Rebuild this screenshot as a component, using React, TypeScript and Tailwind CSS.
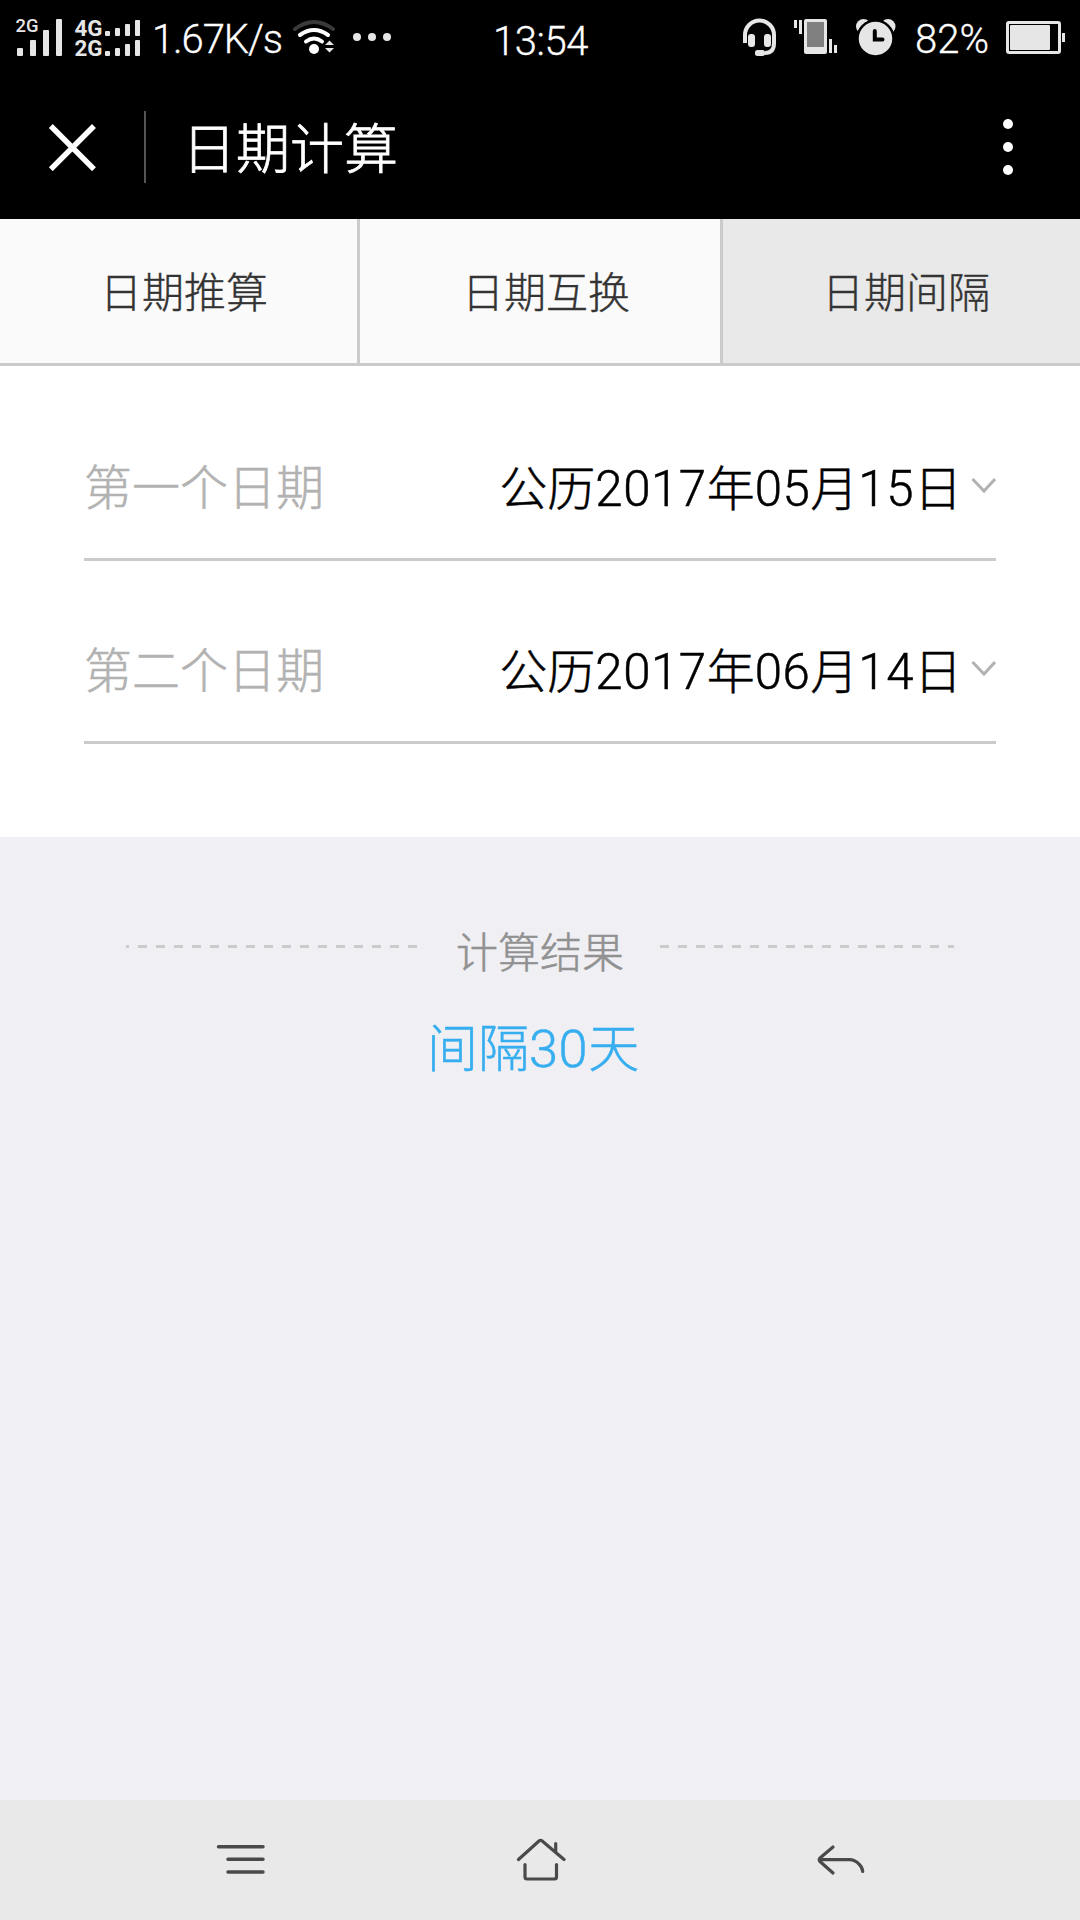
import type { ReactNode } from "react";

const FONT = "font-['Roboto','Noto_Sans_CJK_SC',sans-serif]";

function Latin({ children }: { children: ReactNode }) {
  return <span className="text-[1.025em] tracking-[0.011em]">{children}</span>;
}

function StatusBar() {
  return (
    <div className="flex h-20 pl-4 text-[40px] leading-[80px] font-light whitespace-nowrap text-white">
      <svg className="h-20 w-[46px] shrink-0" viewBox="16 0 46 80" fill="#e6e6e6">
        <text x="15.5" y="32" fontSize="17.5" fontWeight="500" textLength="23" lengthAdjust="spacingAndGlyphs">2G</text>
        <rect x="17" y="48" width="6" height="8" rx="1" />
        <rect x="30" y="40" width="6" height="16" rx="1" />
        <rect x="43" y="30" width="6" height="26" rx="1" />
        <rect x="56" y="19" width="6" height="37" rx="1" />
      </svg>
      <svg className="ml-3 h-20 w-[68px] shrink-0" viewBox="74 0 68 80" fill="#e6e6e6">
        <text x="74.5" y="36" fontSize="21.5" fontWeight="700" textLength="28" lengthAdjust="spacingAndGlyphs">4G</text>
        <text x="74.5" y="56" fontSize="21.5" fontWeight="700" textLength="28" lengthAdjust="spacingAndGlyphs">2G</text>
        <rect x="105" y="31" width="5" height="5" rx="1" />
        <rect x="115" y="28" width="5" height="8" rx="1" />
        <rect x="125" y="24" width="5" height="12" rx="1" />
        <rect x="135" y="20" width="5" height="16" rx="1" />
        <rect x="105" y="51" width="5" height="5" rx="1" />
        <rect x="115" y="48" width="5" height="8" rx="1" />
        <rect x="125" y="44" width="5" height="12" rx="1" />
        <rect x="135" y="40" width="5" height="16" rx="1" />
      </svg>
      <span className="ml-[10px] w-[139px] tracking-[-1.1px] [-webkit-text-stroke:0.3px]">1.67K/s</span>
      <svg className="h-20 w-11 shrink-0" viewBox="291 0 44 80" fill="none" strokeLinecap="round" strokeWidth="4">
        <path d="M295 29 Q314 15 333 29" stroke="#3a3a3a" />
        <path d="M300 35 Q314 25 328 35" stroke="#fff" />
        <path d="M306 41.500 Q314 35.500 322 41.500" stroke="#fff" />
        <circle cx="314" cy="49" r="5" fill="#fff" />
        <path d="M325 45 L329.500 40.500 L334 45 Z M325 48 L329.500 52.500 L334 48 Z" fill="#e6e6e6" />
      </svg>
      <svg className="ml-[17px] h-20 w-10 shrink-0" viewBox="352 0 40 80" fill="#e6e6e6">
        <circle cx="357" cy="37" r="4" />
        <circle cx="372" cy="37" r="4" />
        <circle cx="387" cy="37" r="4" />
      </svg>
      <span className="ml-[101px] w-[249px] leading-[83px] tracking-[-0.4px] [-webkit-text-stroke:0.3px]">13:54</span>
      <svg className="h-20 w-9 shrink-0" viewBox="742 0 36 80" fill="none" stroke="#e6e6e6" strokeWidth="4">
        <path d="M745 43 V35 A14.500 14.500 0 0 1 774 35 V43 Q774 53 765 53" />
        <rect x="748" y="34" width="7" height="13" rx="3" fill="#e6e6e6" stroke="none" />
        <rect x="764" y="34" width="7" height="13" rx="3" fill="#e6e6e6" stroke="none" />
        <rect x="755" y="50" width="10" height="6" rx="2.500" fill="#e6e6e6" stroke="none" />
      </svg>
      <svg className="ml-4 h-20 w-11 shrink-0" viewBox="794 0 44 80" fill="#e6e6e6">
        <rect x="794" y="20" width="3" height="8" />
        <rect x="799" y="20" width="3" height="14" />
        <rect x="804" y="19" width="23" height="35" rx="2" />
        <rect x="807" y="22" width="17" height="25" fill="#808080" />
        <rect x="829" y="39" width="3" height="14" />
        <rect x="834" y="45" width="3" height="8" />
      </svg>
      <svg className="ml-[18px] h-20 w-10 shrink-0" viewBox="856 0 40 80" fill="#e6e6e6">
        <circle cx="863.500" cy="26.500" r="7.500" />
        <circle cx="888" cy="26.500" r="7.500" />
        <circle cx="875.500" cy="38.500" r="18" stroke="#000" strokeWidth="2.500" />
        <path d="M874.800 31 V39.500 H882.500" fill="none" stroke="#000" strokeWidth="4" strokeLinecap="round" />
      </svg>
      <span className="ml-[19px] w-[91px] [-webkit-text-stroke:0.3px]">82%</span>
      <svg className="h-20 w-[60px] shrink-0" viewBox="1006 0 60 80" fill="#e6e6e6">
        <rect x="1007.500" y="22.500" width="52" height="30" rx="1.500" fill="none" stroke="#e6e6e6" strokeWidth="3" />
        <rect x="1010" y="25" width="40" height="25" rx="1" />
        <rect x="1062" y="33" width="3" height="9" />
      </svg>
    </div>
  );
}

function TitleBar() {
  return (
    <div className="flex h-[139px] items-start text-white">
      <svg className="mt-[43px] ml-12 size-12" viewBox="48 123 48 48" stroke="#fff" strokeWidth="5.500">
        <path d="M50.800 126 L94 169.200 M94 126 L50.800 169.200" />
      </svg>
      <div className="mt-[31px] ml-12 h-[72px] w-0.5 bg-[#555]" />
      <h1 className="mt-[31px] ml-9 text-[54px] leading-[80px] font-light [-webkit-text-stroke:0.8px]">日期计算</h1>
      <svg className="mt-[38px] mr-[67px] ml-auto h-[58px] w-[10px]" viewBox="0 0 10 58" fill="#fff">
        <circle cx="5" cy="6" r="5" />
        <circle cx="5" cy="29" r="5" />
        <circle cx="5" cy="52" r="5" />
      </svg>
    </div>
  );
}

function DateRow({ label, children }: { label: string; children: ReactNode }) {
  return (
    <div className="flex h-[183px] items-start border-b-3 border-[#cbcbcb] pt-[75px] text-5xl leading-[72px] font-light [-webkit-text-stroke:0.5px]">
      <span className="text-[#b2b2b2]">{label}</span>
      <span className="ml-auto whitespace-nowrap text-black">{children}</span>
      <svg className="mt-6 ml-2 h-[18px] w-[26px]" viewBox="0 0 26 18" fill="none" stroke="#b2b2b2" strokeWidth="3">
        <path d="M2.500 2 L14 14 L25 2" />
      </svg>
    </div>
  );
}

export default function App() {
  return (
    <div className={`flex h-[1920px] w-[1080px] flex-col overflow-hidden bg-[#efeff4] ${FONT}`} lang="zh-CN">
      <header className="bg-black">
        <StatusBar />
        <TitleBar />
      </header>
      <nav className="grid h-[147px] grid-cols-[360px_363px_357px] border-b-3 border-[#cbcbcb] bg-[#fafafa] text-[42px] leading-[149px] font-light text-[#333] [-webkit-text-stroke:0.4px]">
        <div className="h-36 border-r-3 border-[#cbcbcb] pl-[100px]">日期推算</div>
        <div className="h-36 border-r-3 border-[#cbcbcb] pl-[102px]">日期互换</div>
        <div className="h-36 bg-[#e9e9e9] pl-[99px]">日期间隔</div>
      </nav>
      <section className="h-[471px] bg-white px-[84px] pt-3">
        <DateRow label="第一个日期">
          公历<Latin>2017</Latin>年<Latin>05</Latin>月<Latin>15</Latin>日
        </DateRow>
        <DateRow label="第二个日期">
          公历<Latin>2017</Latin>年<Latin>06</Latin>月<Latin>14</Latin>日
        </DateRow>
      </section>
      <section className="flex-1 pt-[99px] font-light [-webkit-text-stroke:0.5px]">
        <div className="flex h-[60px] justify-between px-[126px]">
          <svg className="mt-[9px] h-[3px] w-[294px]" viewBox="0 0 294 3" stroke="#cbcbcb" strokeWidth="3">
            <path d="M0 1.500 H3" />
            <path d="M12 1.500 H291" strokeDasharray="9 9" />
          </svg>
          <span className="-mt-3 text-[42px] leading-[60px] text-[#919191]">计算结果</span>
          <svg className="mt-[9px] h-[3px] w-[294px]" viewBox="0 0 294 3" stroke="#cbcbcb" strokeWidth="3">
            <path d="M0 1.500 H294" strokeDasharray="9 9" />
          </svg>
        </div>
        <div className="mt-[18px] pl-[427px] text-[51px] leading-[72px] text-[#36aeef]">
          间隔<Latin>30</Latin>天
        </div>
      </section>
      <footer className="flex h-[120px] items-start justify-between bg-[#e9e9e9] pt-9 pr-[214px] pl-[216px]">
        <svg className="h-12 w-[50px]" viewBox="216 1836 50 48" fill="none" stroke="#4a4a4a" strokeWidth="3.500" strokeLinecap="round">
          <path d="M218.500 1846.800 H263 M228 1859.300 H263 M228 1872 H263" />
        </svg>
        <svg className="h-12 w-[50px]" viewBox="516 1836 50 48" fill="none" stroke="#4a4a4a" strokeWidth="3.200" strokeLinecap="round" strokeLinejoin="round">
          <path d="M518.500 1859.500 L539 1841 Q540.600 1839.700 542.200 1841 L564 1859.500 M555.700 1843.500 V1852 M525 1864.500 V1877 Q525 1879 527 1879 H554.500 Q556.500 1879 556.500 1877 V1864.500" />
        </svg>
        <svg className="h-12 w-[50px]" viewBox="816 1836 50 48" fill="none" stroke="#4a4a4a" strokeWidth="3.200" strokeLinecap="round" strokeLinejoin="round">
          <path d="M833 1847 L820 1858 Q818.500 1859.700 820 1861.500 L833 1873 M820 1859.700 H849.500 C857 1859.700 862.500 1867 862.700 1871.500" />
        </svg>
      </footer>
    </div>
  );
}
